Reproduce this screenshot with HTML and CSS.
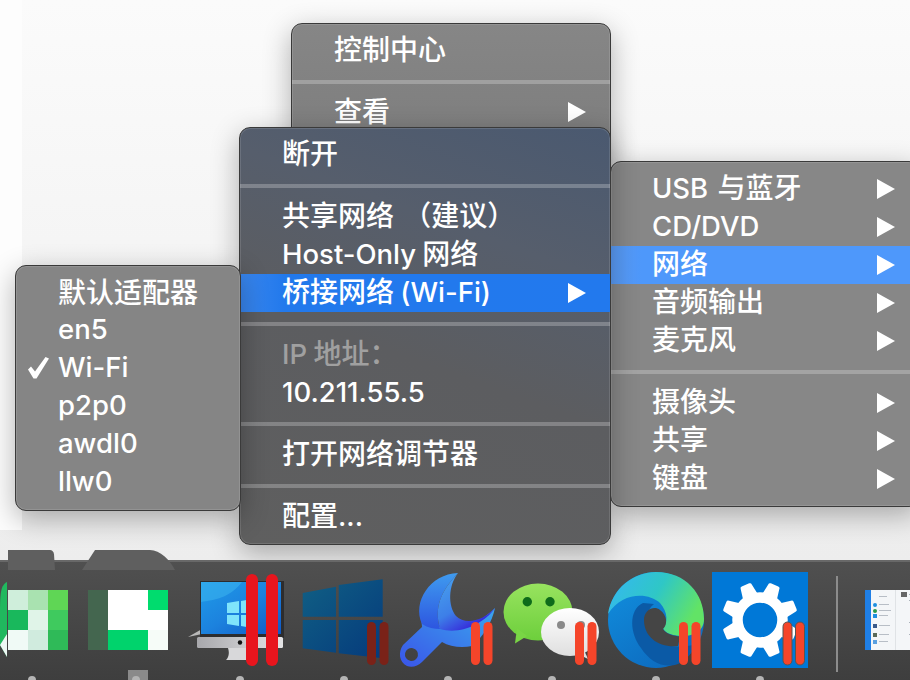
FILE: index.html
```html
<!DOCTYPE html>
<html lang="zh-CN">
<head>
<meta charset="utf-8">
<title>Parallels Desktop 菜单</title>
<link rel="stylesheet" href="styles.css">
</head>
<body>
<svg class="defs" width="0" height="0" aria-hidden="true">
  <defs>
    <g id="bars">
      <rect x="71" y="50" width="9" height="43" rx="4.5"/>
      <rect x="83.5" y="50" width="9" height="43" rx="4.5"/>
    </g>
    <linearGradient id="winBlue" x1="0" y1="0" x2="1" y2="1"><stop offset="0" stop-color="#105f84"/><stop offset="1" stop-color="#053a7c"/></linearGradient>
    <linearGradient id="screenBlue" x1="0" y1="0" x2="1" y2="1"><stop offset="0" stop-color="#1f9be8"/><stop offset=".5" stop-color="#1c82de"/><stop offset="1" stop-color="#1059c4"/></linearGradient>
    <linearGradient id="chin" x1="0" y1="0" x2="1" y2="0"><stop offset="0" stop-color="#a8a8ac"/><stop offset="1" stop-color="#e4e4e6"/></linearGradient>
    <linearGradient id="wrenchA" x1="0" y1="0" x2="0" y2="1"><stop offset="0" stop-color="#3f9bef"/><stop offset="1" stop-color="#2d55e0"/></linearGradient>
    <linearGradient id="wrenchC" x1="0" y1="0" x2=".6" y2="1"><stop offset="0" stop-color="#4aa6ee"/><stop offset=".6" stop-color="#3d7fe8"/><stop offset="1" stop-color="#3520d8"/></linearGradient>
    <linearGradient id="wrenchB" x1="0" y1="1" x2="1" y2="0"><stop offset="0" stop-color="#3a55e8"/><stop offset="1" stop-color="#3aa6ee"/></linearGradient>
    <linearGradient id="wechatGreen" x1="0" y1="0" x2="0" y2="1"><stop offset="0" stop-color="#98e35f"/><stop offset="1" stop-color="#6dcf3c"/></linearGradient>
    <linearGradient id="wechatWhite" x1="0" y1="0" x2="0" y2="1"><stop offset="0" stop-color="#ffffff"/><stop offset="1" stop-color="#dfdfdf"/></linearGradient>
    <linearGradient id="edgeTop" x1="0" y1="0" x2="1" y2=".4"><stop offset="0" stop-color="#35b6f5"/><stop offset=".55" stop-color="#2fc7c6"/><stop offset="1" stop-color="#62e366"/></linearGradient>
    <linearGradient id="edgeBase" x1="0" y1="0" x2=".6" y2="1"><stop offset="0" stop-color="#1191e0"/><stop offset="1" stop-color="#0d6cc0"/></linearGradient>
    <g id="tooth"><path d="M-8 -24 L-6 -36 Q-6 -38 -4 -38 H4 Q6 -38 6 -36 L8 -24 Z" fill="#fff"/></g>
  </defs>
</svg>

<main class="desktop">
  <section class="menu menu-back">
    <div class="row"><span class="label">控制中心</span></div>
    <hr class="sep">
    <div class="row"><span class="label">查看</span><i class="arrow"></i></div>
  </section>

  <section class="menu menu-devices">
    <div class="row"><span class="label label-wide"><span class="lat">USB</span> 与蓝牙</span><i class="arrow"></i></div>
    <div class="row"><span class="label"><span class="lat">CD/DVD</span></span><i class="arrow"></i></div>
    <div class="row row-light"><span class="label">网络</span><i class="arrow"></i></div>
    <div class="row"><span class="label">音频输出</span><i class="arrow"></i></div>
    <div class="row"><span class="label">麦克风</span><i class="arrow"></i></div>
    <hr class="sep">
    <div class="row"><span class="label">摄像头</span><i class="arrow"></i></div>
    <div class="row"><span class="label">共享</span><i class="arrow"></i></div>
    <div class="row"><span class="label">键盘</span><i class="arrow"></i></div>
  </section>

  <section class="menu menu-network">
    <div class="row"><span class="label">断开</span></div>
    <hr class="sep">
    <div class="row"><span class="label label-wide">共享网络 （建议）</span></div>
    <div class="row"><span class="label"><span class="lat">Host-Only</span> 网络</span></div>
    <div class="row row-active"><span class="label">桥接网络 <span class="lat">(Wi-Fi)</span></span><i class="arrow"></i></div>
    <hr class="sep">
    <div class="row row-off"><span class="label"><span class="lat">IP</span> 地址：</span></div>
    <div class="row"><span class="label"><span class="lat">10.211.55.5</span></span></div>
    <hr class="sep">
    <div class="row"><span class="label">打开网络调节器</span></div>
    <hr class="sep">
    <div class="row"><span class="label">配置<span class="lat">...</span></span></div>
  </section>

  <section class="menu menu-adapter">
    <div class="row"><span class="label">默认适配器</span></div>
    <div class="row"><span class="label lat">en5</span></div>
    <div class="row">
      <svg class="check" viewBox="0 0 24 24" width="24" height="24"><path d="M2 13.5 L5 10.5 L9 15.5 L19.5 1 L23 2.5 L10.5 22.5 L7.5 22.5 Z" fill="#fff"/></svg>
      <span class="label lat">Wi-Fi</span>
    </div>
    <div class="row"><span class="label lat">p2p0</span></div>
    <div class="row"><span class="label lat">awdl0</span></div>
    <div class="row"><span class="label lat">llw0</span></div>
  </section>
</main>

<footer class="dock">
  <div class="dock-item">
    <svg class="icon" viewBox="0 0 96 96">
      <path d="M24 -22 H66 Q69 -22 70 -18 L71 -2 H24 Z" fill="#5f5f5f"/>
      <path d="M23 10 C17 13 16 20 16 40 V73 L23 85 Z" fill="#20b85e"/>
      <path d="M16 73 L23 62 V85 Z" fill="#eef8f4"/>
      <rect x="24" y="18" width="20" height="20" fill="#cfeedb"/><rect x="44" y="18" width="20" height="20" fill="#a9e2b0"/><rect x="64" y="18" width="20" height="20" fill="#5fd655"/>
      <rect x="24" y="38" width="20" height="20" fill="#19b85c"/><rect x="44" y="38" width="20" height="20" fill="#e0f4e8"/><rect x="64" y="38" width="20" height="20" fill="#3fca5e"/>
      <rect x="24" y="58" width="20" height="20" fill="#f0faf6"/><rect x="44" y="58" width="20" height="20" fill="#d0ebde"/><rect x="64" y="58" width="20" height="20" fill="#2fba58"/>
    </svg>
    <i class="dot"></i>
  </div>
  <div class="dock-item">
    <svg class="icon" viewBox="0 0 96 96">
      <path d="M-6 -2 L7 -22 H62 C72 -22 82 -12 87 -2 Z" fill="#5f5f5f"/>
      <rect x="0" y="18" width="20" height="60" fill="#44664f"/>
      <rect x="20" y="18" width="60" height="60" fill="#fff"/>
      <rect x="60" y="18" width="20" height="20" fill="#00dc6e"/>
      <rect x="20" y="58" width="40" height="20" fill="#00d36c"/>
      <rect x="60" y="58" width="20" height="20" fill="#f6fcf8"/>
      <rect x="40" y="98" width="20" height="14" fill="#8a8a8a"/>
    </svg>
    <i class="dot"></i>
  </div>
  <div class="dock-item">
    <svg class="icon" viewBox="0 0 96 96">
      <path d="M-4 65 L10 57 V62 Z" fill="#b8b8b8"/>
      <rect x="8" y="9" width="84" height="57" fill="#2c2c2e"/>
      <rect x="9" y="10" width="80" height="52" fill="url(#screenBlue)"/>
      <path d="M9 10 H50 C38 26 22 28 9 30 Z" fill="#3cb4ee" opacity=".55"/>
      <path d="M35 31 L47 29 V41 H35 Z M49 29 L60 27 V41 H49 Z M35 43 H47 V54 L35 52 Z M49 43 H60 V56 L49 54 Z" fill="#7fe4fb"/>
      <rect x="5" y="65" width="86" height="11" rx="1.5" fill="url(#chin)"/>
      <circle cx="48" cy="70.5" r="2.2" fill="#111"/>
      <path d="M36 76 H55 V88 H34 C36 86 38 82 36 76 Z" fill="#d8d8da"/>
      <rect x="54" y="2" width="12" height="92" rx="6" fill="#e8151d"/>
      <rect x="74" y="2" width="12" height="92" rx="6" fill="#e8151d"/>
    </svg>
    <i class="dot"></i>
  </div>
  <div class="dock-item">
    <svg class="icon" viewBox="0 0 96 96">
      <path d="M6.7 21 L40 14.7 V44.7 H6.7 Z M42.7 13 L86.7 7.3 V44.7 H42.7 Z M6.7 48 H40 V80.7 L6.7 76.3 Z M42.7 48 H86.7 V86.3 L42.7 81.3 Z" fill="url(#winBlue)"/>
      <use href="#bars" fill="#7a2218"/>
    </svg>
    <i class="dot"></i>
  </div>
  <div class="dock-item">
    <svg class="icon" viewBox="0 0 96 96">
      <path fill-rule="evenodd" d="M21 44 C34 60 70 62 95 36 C92 50 84 64 72 74 C62 76 50 75 42 70 L22 90 C18 94 12 96 7 94 C-1 90 -2 80 3 73 L22 55 Z M8 77 A6.5 6.5 0 1 0 15 88 A6.5 6.5 0 1 0 8 77 Z" fill="url(#wrenchB)"/>
      <path d="M58 1 C30 2 12 30 22 52 C28 56 34 57 40 57 C34 36 40 20 58 1 Z" fill="url(#wrenchA)"/>
      <path d="M58 1 C40 20 34 36 40 57 C60 63 84 52 95 36 C84 48 66 54 56 44 C48 34 48 14 58 1 Z" fill="url(#wrenchC)"/>
      <use href="#bars" fill="#f5452a"/>
    </svg>
    <i class="dot"></i>
  </div>
  <div class="dock-item">
    <svg class="icon" viewBox="0 0 96 96">
      <ellipse cx="34" cy="40" rx="34.5" ry="28.5" fill="url(#wechatGreen)"/>
      <path d="M11 71.5 L23 64 L13 56 Z" fill="#79d545"/>
      <circle cx="23.3" cy="29.7" r="4.7" fill="#0e6b1a"/>
      <circle cx="46" cy="29.7" r="4.7" fill="#0e6b1a"/>
      <ellipse cx="66" cy="60" rx="29" ry="24" fill="url(#wechatWhite)"/>
      <path d="M80 78 L84 87 L74 82 Z" fill="#dfdfdf"/>
      <circle cx="57" cy="53" r="4" fill="#8a8a8a"/>
      <circle cx="77" cy="53" r="4" fill="#8a8a8a"/>
      <use href="#bars" fill="#f5452a"/>
    </svg>
    <i class="dot"></i>
  </div>
  <div class="dock-item">
    <svg class="icon" viewBox="0 0 96 96">
      <circle cx="48" cy="48" r="48" fill="url(#edgeBase)"/>
      <path d="M35 31 C20 38 22 62 33 76 C42 90 56 97 70 92 C76 90 84 82 88 72 C70 78 50 74 42 60 C37 50 38 38 46 32 Z" fill="#0b5aa6"/>
      <path d="M0 42 C4 16 26 0 48 0 C78 0 96 22 96 47 C96 60 84 65 72 64 C62 63 56 60 55 56 C60 51 60 40 52 31 C40 20 14 20 0 42 Z" fill="url(#edgeTop)"/>
      <path d="M36 48 C36 38 46 33 52 38 C59 43 60 52 55 57 C58 62 66 64 72 64.5 L70 74 C52 76 36 66 36 48 Z" fill="#454545"/>
      <use href="#bars" fill="#f5452a"/>
    </svg>
    <i class="dot"></i>
  </div>
  <div class="dock-item">
    <svg class="icon" viewBox="0 0 96 96">
      <rect width="96" height="96" fill="#0078d7"/>
      <g transform="translate(48 48)">
        <circle r="22.5" fill="none" stroke="#fff" stroke-width="10.5"/>
        <use href="#tooth" transform="rotate(22.5)"/><use href="#tooth" transform="rotate(67.5)"/>
        <use href="#tooth" transform="rotate(112.5)"/><use href="#tooth" transform="rotate(157.5)"/>
        <use href="#tooth" transform="rotate(202.5)"/><use href="#tooth" transform="rotate(247.5)"/>
        <use href="#tooth" transform="rotate(292.5)"/><use href="#tooth" transform="rotate(337.5)"/>
      </g>
      <use href="#bars" fill="#f5452a" stroke="#555" stroke-width="1"/>
    </svg>
    <i class="dot"></i>
  </div>
  <div class="dock-divider"></div>
  <svg class="thumb" viewBox="0 0 60 60">
    <rect width="60" height="60" fill="#f4f6f8"/>
    <rect width="6" height="60" fill="#1f7fe6"/>
    <g fill="#1f8fe0"><rect x="8" y="13" width="4" height="4" rx="2"/><rect x="8" y="24" width="4" height="4"/><rect x="8" y="34" width="4" height="4" fill="#3a5a8a"/></g>
    <g fill="#5a6a5a"><rect x="8" y="19" width="4" height="4" rx="2" fill="#2a9a4a"/><rect x="8" y="43" width="4" height="4"/><rect x="8" y="50" width="4" height="4" fill="#5aa0e0"/></g>
    <g fill="#b8bec6"><rect x="14" y="6" width="8" height="1"/><rect x="14" y="14" width="10" height="1"/><rect x="14" y="20" width="12" height="1"/><rect x="14" y="25" width="9" height="1"/><rect x="14" y="35" width="11" height="1"/><rect x="14" y="44" width="10" height="1"/><rect x="14" y="51" width="9" height="1"/></g>
    <rect x="36" y="2" width="6" height="5" fill="#666"/>
    <g fill="#aab2ba"><rect x="44" y="4" width="12" height="1"/><rect x="44" y="10" width="14" height="1"/><rect x="44" y="32" width="12" height="1"/><rect x="44" y="44" width="10" height="1"/></g>
    <rect x="30" y="0" width="1" height="60" fill="#e0e3e6"/>
  </svg>
</footer>
</body>
</html>
```

FILE: styles.css
```css
* { box-sizing: border-box; }

html, body {
  margin: 0;
  padding: 0;
  width: 910px;
  height: 680px;
  overflow: hidden;
  background: #f4f4f4;
  font-family: "Noto Sans CJK SC", "Liberation Sans", sans-serif;
}

.defs { position: absolute; }

.desktop {
  position: relative;
  height: 560px;
  background: linear-gradient(90deg, #fdfdfd 0 22px, transparent 22px) 0 0 / 100% 530px no-repeat,
              linear-gradient(#fbfbfb, #ededed);
}

.menu {
  position: absolute;
  padding: 7px 0 8px;
  border: 1px solid #3a3a3a;
  border-radius: 11px;
  color: #fff;
  font-size: 28px;
  font-weight: 500;
  background: #868686;
  box-shadow: inset 0 0 0 1px rgba(255, 255, 255, .12), 0 8px 28px rgba(0, 0, 0, .3);
}

.menu-back { left: 291px; top: 23px; width: 320px; height: 160px; background: linear-gradient(#868686, #7b7b7b); }
.menu-devices { left: 610px; top: 161px; width: 310px; height: 346px; background: #878787; }
.menu-network {
  left: 239px;
  top: 127px;
  width: 372px;
  height: 418px;
  background: linear-gradient(200deg, #4a5970 0, #565e6c 28%, #5c5d60 55%, #5f5f5f 100%);
}
.menu-adapter { left: 15px; top: 265px; width: 226px; height: 246px; background: #858585; }

.row {
  display: grid;
  grid-template-columns: 42px 1fr auto;
  align-items: center;
  height: 38px;
  padding-right: 24px;
  white-space: nowrap;
}

.menu-devices .row { grid-template-columns: 41px 1fr auto; }

.label {
  grid-column: 2;
  height: 38px;
  padding-bottom: 4px;
  line-height: 34px;
}

.label-wide { word-spacing: 3px; }
.menu-adapter .label { padding-bottom: 2px; line-height: 36px; }

.lat { font-family: "Inter", "Liberation Sans", sans-serif; font-size: 27.5px; }

.row-active, .row-light { margin: 1px 0 -1px; }
.row-active .label, .row-light .label { padding-bottom: 6px; line-height: 32px; }
.row-active { background: linear-gradient(90deg, #3a87ef, #2279ec 12%, #2279ee); }
.row-light { background: linear-gradient(90deg, #5b9cf5, #4e98fb 10%); }
.row-off { color: #a0a0a0; }

.sep {
  height: 4px;
  margin: 11px 0 9px;
  border: 0;
  background: rgba(255, 255, 255, .24);
}

.arrow {
  grid-column: 3;
  width: 0;
  height: 0;
  border-left: 18px solid #fff;
  border-top: 10px solid transparent;
  border-bottom: 10px solid transparent;
}

.menu-devices .arrow { margin-top: 2px; }
.menu-devices .row-light .arrow { margin-top: 0; }

.check { grid-column: 1; grid-row: 1; justify-self: end; margin-right: 8px; }
.row .check + .label { grid-row: 1; }

.dock {
  position: relative;
  display: flex;
  align-items: flex-start;
  width: 960px;
  height: 120px;
  margin-left: -20px;
  padding-top: 12px;
  background: linear-gradient(#505050, #3e3e3e);
  box-shadow: inset 0 2px 0 #686868;
}

.dock-item {
  flex: 0 0 104px;
  display: flex;
  flex-direction: column;
  align-items: center;
  gap: 8px;
}

.icon { display: block; width: 96px; height: 96px; overflow: visible; }

.dot {
  width: 8px;
  height: 8px;
  border-radius: 50%;
  background: #b4b4b4;
}

.dock-divider {
  flex: none;
  width: 2px;
  height: 96px;
  margin: 4px 0 0 24px;
  background: #8c8c8c;
}

.thumb { flex: none; width: 60px; height: 60px; margin: 18px 0 0 27px; }
```
